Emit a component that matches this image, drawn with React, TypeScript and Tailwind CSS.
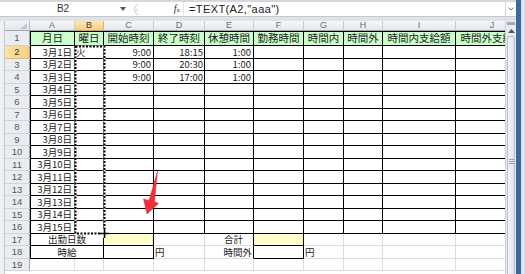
import React from "react";

// ─── Sheet data ───────────────────────────────────────────────────────────────

const cols = [
  { id: "A", w: "w-[45px]" },
  { id: "B", w: "w-[29px]" },
  { id: "C", w: "w-[50px]" },
  { id: "D", w: "w-[51px]" },
  { id: "E", w: "w-[49px]" },
  { id: "F", w: "w-[50px]" },
  { id: "G", w: "w-[40px]" },
  { id: "H", w: "w-[39px]" },
  { id: "I", w: "w-[73px]" },
  { id: "J", w: "w-[73px]" },
];

const headers = ["月日", "曜日", "開始時刻", "終了時刻", "休憩時間", "勤務時間", "時間内", "時間外", "時間内支給額", "時間外支給額"];

const endTimes: Record<number, string> = { 2: "18:15", 3: "20:30", 4: "17:00" };

type Spec = { text?: string; align?: "l" | "r" | "c"; bg?: string; pad?: string };

/** cells that carry a black outline */
function boxed(r: number, c: number): boolean {
  if (r >= 1 && r <= 16) return c >= 0 && c <= 9;
  if (r === 17 || r === 18) return c === 0 || c === 1 || c === 2 || c === 5;
  return false;
}

function cellSpec(r: number, c: number): Spec {
  if (r === 1) return { text: headers[c], align: "c", bg: "bg-[#ccffcc]" };
  if (r >= 2 && r <= 16) {
    if (c === 0) return { text: `3月${r - 1}日`, align: "r" };
    if (c === 1 && r === 2) return { text: "火", align: "l" };
    if (r <= 4 && c === 2) return { text: "9:00", align: "r" };
    if (r <= 4 && c === 3) return { text: endTimes[r], align: "r", pad: "pr-[1px]" };
    if (r <= 4 && c === 4) return { text: "1:00", align: "r" };
    return {};
  }
  if (r === 17) {
    if (c === 0) return { text: "出勤日数", align: "c" };
    if (c === 2) return { bg: "bg-[#ffffcc]" };
    if (c === 4) return { text: "合計", align: "r", pad: "pr-[10px]" };
    if (c === 5) return { bg: "bg-[#ffffcc]" };
  }
  if (r === 18) {
    if (c === 0) return { text: "時給", align: "c" };
    if (c === 3) return { text: "円", align: "l" };
    if (c === 4) return { text: "時間外", align: "r", pad: "pr-[1px]" };
    if (c === 6) return { text: "円", align: "l" };
  }
  return {};
}

const CJK = "font-['Noto_Sans_CJK_JP',sans-serif]";
const LAT = "font-['Liberation_Sans',Arial,sans-serif]";

// ─── Formula bar ──────────────────────────────────────────────────────────────

function FormulaBar() {
  return (
    <div className="h-[15px] flex bg-white border-b border-[#c3c9d1]">
      <div className="w-[130px] flex items-center">
        <span className={`flex-1 text-center pl-[6px] text-[10px] leading-none text-[#333] ${LAT}`}>B2</span>
        <svg width="6" height="4" viewBox="0 0 6 4" className="mr-[4px]">
          <path d="M0 0 L6 0 L3 4 Z" fill="#555" />
        </svg>
      </div>
      <div className="w-[53px] flex items-center">
        <svg width="8" height="13" viewBox="0 0 8 13" className="ml-[1px]">
          <path d="M7 1 A6 6 0 0 0 7 12" stroke="#c6ccd3" strokeWidth="1" fill="none" />
          <path d="M5 6 H7 M5 8 H7" stroke="#d5dae0" strokeWidth="1" />
        </svg>
        <span className="ml-auto mr-[3px] text-[10px] leading-none italic font-['Liberation_Serif',serif] text-[#333]">
          f<span className="text-[7px] not-italic">x</span>
        </span>
      </div>
      <div className="flex-1 flex items-center pl-[5px] border-l border-[#e1e5ea]">
        <span className={`text-[11px] leading-none tracking-[0.4px] text-[#222] ${LAT}`}>=TEXT(A2,"aaa")</span>
      </div>
      <div className="w-[11px] flex items-center justify-center border-l border-[#d0d5dc]">
        <svg width="6" height="4" viewBox="0 0 6 4">
          <path d="M0.5 0.5 L3 3 L5.5 0.5" stroke="#6b7580" strokeWidth="1" fill="none" />
        </svg>
      </div>
    </div>
  );
}

// ─── Grid pieces ──────────────────────────────────────────────────────────────

function ColumnHeaders() {
  return (
    <div className="h-[10px] flex shrink-0">
      <div className="w-[25px] shrink-0 relative border-r border-b border-r-[#b4bcc6] border-b-[#9ea8b3] bg-linear-to-b from-[#f3f5f7] to-[#e3e7ec]">
        <svg width="7" height="6" viewBox="0 0 7 6" className="absolute right-[2px] bottom-[1px]">
          <path d="M7 0 L7 6 L0 6 Z" fill="#c2c8cf" />
        </svg>
      </div>
      {cols.map((col) => (
        <div
          key={col.id}
          className={`${col.w} shrink-0 flex items-center justify-center border-r border-b text-[9px] leading-none ${LAT} ${
            col.id === "B"
              ? "bg-linear-to-b from-[#fde7b4] to-[#f7cf7f] border-r-[#e0b56a] border-b-[#d9a64f] text-[#3a3a3a]"
              : "bg-linear-to-b from-[#f5f7f9] to-[#e4e8ed] border-r-[#c5ccd4] border-b-[#9ea8b3] text-[#6b6b6b]"
          }`}
        >
          {col.id}
        </div>
      ))}
    </div>
  );
}

function SheetRow({ r }: { r: number }) {
  const h = r === 1 ? "h-[15px]" : r % 2 === 0 ? "h-[13px]" : "h-[12px]";
  const cells: React.ReactNode[] = [];

  for (let c = 0; c < cols.length; c++) {
    const merged = (r === 17 || r === 18) && c === 0;
    const lastC = merged ? 1 : c;
    const spec = cellSpec(r, c);
    const w = merged ? "w-[74px]" : cols[c].w;
    const rightBlack = boxed(r, lastC) || boxed(r, lastC + 1);
    const bottomBlack = boxed(r, c) || boxed(r + 1, c);
    const align =
      spec.align === "r" ? `justify-end ${spec.pad ?? "pr-[2px]"}` : spec.align === "l" ? "justify-start pl-[1px]" : "justify-center";

    cells.push(
      <div
        key={c}
        className={`${w} shrink-0 flex whitespace-nowrap border-r border-b text-[#1a1a1a] ${CJK} ${align} ${
          r === 1
            ? "items-center text-[10.5px] leading-none border-t border-t-black"
            : "items-end pb-[1px] text-[9.5px] leading-[10px]"
        } ${rightBlack ? "border-r-black" : "border-r-[#dadcdf]"} ${bottomBlack ? "border-b-black" : "border-b-[#dadcdf]"} ${
          c === 0 && boxed(r, 0) ? "border-l border-l-black" : ""
        } ${spec.bg ?? "bg-white"}`}
      >
        {spec.text}
      </div>
    );
    if (merged) c++;
  }

  return (
    <div className={`${h} flex shrink-0`}>
      <div
        className={`w-[25px] shrink-0 flex items-center justify-center border-r border-b text-[9.5px] leading-none ${LAT} ${
          r === 2
            ? "bg-linear-to-r from-[#fbe2a6] to-[#f7d084] border-r-[#d9a64f] border-b-[#e4bd74] text-[#333]"
            : "bg-[#e9ecf0] border-r-[#9ea8b3] border-b-[#cfd4da] text-[#585858]"
        }`}
      >
        {r}
      </div>
      {cells}
    </div>
  );
}

function ScrollBar() {
  return (
    <div className="w-[11px] shrink-0 flex flex-col bg-[#e7eaee] border-l border-[#cbd0d6] overflow-hidden">
      <div className="h-[6px] mx-[1px] mt-[1px] border border-[#a2abb5] bg-[#f5f7f9] flex items-center">
        <div className="w-full h-px bg-[#a2abb5]" />
      </div>
      <div className="h-[11px] shrink-0 flex items-center justify-center">
        <svg width="7" height="4" viewBox="0 0 7 4">
          <path d="M0 4 L3.5 0 L7 4 Z" fill="#4f5963" />
        </svg>
      </div>
      <div className="h-[250px] shrink-0 mx-[1px] rounded-[2px] border border-[#b7bfc8] bg-linear-to-r from-[#f1f3f6] to-[#dfe4ea] flex flex-col items-center justify-center gap-[1px]">
        <div className="w-[5px] h-px bg-[#9aa3ad]" />
        <div className="w-[5px] h-px bg-[#9aa3ad]" />
        <div className="w-[5px] h-px bg-[#9aa3ad]" />
      </div>
    </div>
  );
}

// ─── Overlay: copy marquee, fill cursor, red arrow ────────────────────────────

function Overlay() {
  return (
    <svg className="absolute left-0 top-0 pointer-events-none" width="500" height="253" viewBox="0 0 500 253">
      <rect x="70.5" y="25.5" width="29" height="187" fill="none" stroke="#fff" strokeWidth="2" />
      <rect x="70.5" y="25.5" width="29" height="187" fill="none" stroke="#000" strokeWidth="2" strokeDasharray="2 1.5" />
      <path d="M95 212.5 H104 M99.5 208 V217" stroke="#fff" strokeWidth="3" />
      <path d="M95 212.5 H104 M99.5 208 V217" stroke="#000" strokeWidth="1.6" />
      <polygon
        points="152.5,150 149.5,180.5 153.5,182.5 142,193 138.5,178 144,179.5"
        fill="#f0313c"
        stroke="#e02a35"
        strokeWidth="0.5"
        strokeLinejoin="round"
      />
    </svg>
  );
}

// ─── Page ─────────────────────────────────────────────────────────────────────

export default function App() {
  const rows = Array.from({ length: 19 }, (_, i) => i + 1);
  return (
    <div className="w-[525px] h-[274px] overflow-hidden flex bg-[#dfe3e8]">
      <div className="w-[516px] shrink-0 flex flex-col">
        <div className="h-[2px] shrink-0 bg-[#d2d8e0]" />
        <FormulaBar />
        <div className="h-[4px] shrink-0 bg-[#dfe3e8]" />
        <div className="flex-1 min-h-0 flex overflow-hidden">
          <div className="w-[5px] shrink-0 bg-[#eef0f3] border-r border-[#c0c7cf]" />
          <div className="w-[500px] shrink-0 relative overflow-hidden bg-white">
            <ColumnHeaders />
            {rows.map((r) => (
              <SheetRow key={r} r={r} />
            ))}
            <Overlay />
          </div>
          <ScrollBar />
        </div>
      </div>
      <div className="w-[5px] shrink-0 bg-[#3a68a0]" />
      <div className="w-[4px] shrink-0 bg-[#dde4ec]" />
    </div>
  );
}
